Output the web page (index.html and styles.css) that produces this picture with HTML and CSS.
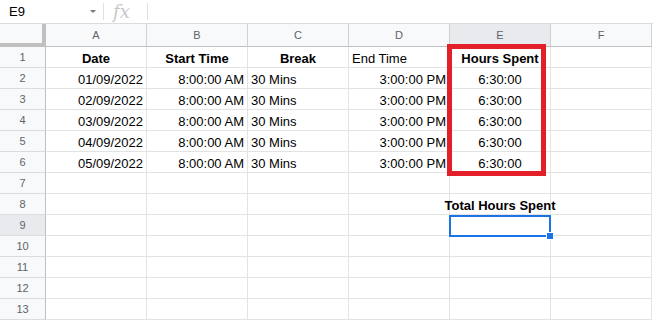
FILE: index.html
```html
<!DOCTYPE html>
<html lang="en">
  <head>
    <meta charset="UTF-8" />
    <title>Hours Spent</title>
    <link rel="stylesheet" href="styles.css">
  </head>
  <body>
    <div class="topbar">
      <div class="namebox">E9</div>
      <div class="namebox-arrow"></div>
      <div class="sep"></div>
      <div class="fx">fx</div>
      <div class="sep"></div>
    </div>

    <div class="sheet">
      <div class="cell corner"></div>
      <div class="cell col-head">A</div>
      <div class="cell col-head">B</div>
      <div class="cell col-head">C</div>
      <div class="cell col-head">D</div>
      <div class="cell col-head active">E</div>
      <div class="cell col-head">F</div>

      <div class="cell row-head">1</div>
      <div class="cell center bold">Date</div>
      <div class="cell center bold">Start Time</div>
      <div class="cell center bold">Break</div>
      <div class="cell">End Time</div>
      <div class="cell center bold">Hours Spent</div>
      <div class="cell"></div>

      <div class="cell row-head">2</div>
      <div class="cell right">01/09/2022</div>
      <div class="cell right">8:00:00 AM</div>
      <div class="cell">30 Mins</div>
      <div class="cell right">3:00:00 PM</div>
      <div class="cell center">6:30:00</div>
      <div class="cell"></div>

      <div class="cell row-head">3</div>
      <div class="cell right">02/09/2022</div>
      <div class="cell right">8:00:00 AM</div>
      <div class="cell">30 Mins</div>
      <div class="cell right">3:00:00 PM</div>
      <div class="cell center">6:30:00</div>
      <div class="cell"></div>

      <div class="cell row-head">4</div>
      <div class="cell right">03/09/2022</div>
      <div class="cell right">8:00:00 AM</div>
      <div class="cell">30 Mins</div>
      <div class="cell right">3:00:00 PM</div>
      <div class="cell center">6:30:00</div>
      <div class="cell"></div>

      <div class="cell row-head">5</div>
      <div class="cell right">04/09/2022</div>
      <div class="cell right">8:00:00 AM</div>
      <div class="cell">30 Mins</div>
      <div class="cell right">3:00:00 PM</div>
      <div class="cell center">6:30:00</div>
      <div class="cell"></div>

      <div class="cell row-head">6</div>
      <div class="cell right">05/09/2022</div>
      <div class="cell right">8:00:00 AM</div>
      <div class="cell">30 Mins</div>
      <div class="cell right">3:00:00 PM</div>
      <div class="cell center">6:30:00</div>
      <div class="cell"></div>

      <div class="cell row-head">7</div>
      <div class="cell"></div><div class="cell"></div><div class="cell"></div>
      <div class="cell"></div><div class="cell"></div><div class="cell"></div>

      <div class="cell row-head">8</div>
      <div class="cell"></div><div class="cell"></div><div class="cell"></div>
      <div class="cell"></div>
      <div class="cell center bold">Total Hours Spent</div>
      <div class="cell"></div>

      <div class="cell row-head active">9</div>
      <div class="cell"></div><div class="cell"></div><div class="cell"></div>
      <div class="cell"></div><div class="cell"></div><div class="cell"></div>

      <div class="cell row-head">10</div>
      <div class="cell"></div><div class="cell"></div><div class="cell"></div>
      <div class="cell"></div><div class="cell"></div><div class="cell"></div>

      <div class="cell row-head">11</div>
      <div class="cell"></div><div class="cell"></div><div class="cell"></div>
      <div class="cell"></div><div class="cell"></div><div class="cell"></div>

      <div class="cell row-head">12</div>
      <div class="cell"></div><div class="cell"></div><div class="cell"></div>
      <div class="cell"></div><div class="cell"></div><div class="cell"></div>

      <div class="cell row-head">13</div>
      <div class="cell"></div><div class="cell"></div><div class="cell"></div>
      <div class="cell"></div><div class="cell"></div><div class="cell"></div>

      <!-- annotation box round the Hours Spent column -->
      <div class="highlight"></div>

      <!-- selected cell E9 -->
      <div class="selection"></div>
      <div class="handle"></div>
    </div>
  </body>
</html>
```

FILE: styles.css
```css
body {
  margin: 0;
  background-color: #fff;
  font-family: "Liberation Sans", Arial, sans-serif;
  width: 653px;
}

.topbar {
  display: flex;
  align-items: center;
  height: 23px;
  border-bottom: 1px solid #dadce0;
}

.namebox {
  width: 80px;
  padding-left: 9px;
  font-size: 13px;
  color: #000;
}

.namebox-arrow {
  width: 0;
  height: 0;
  margin-left: 1px;
  margin-right: 7px;
  border-left: 3px solid transparent;
  border-right: 3px solid transparent;
  border-top: 3px solid #777;
}

.sep {
  width: 1px;
  height: 17px;
  background-color: #e0e0e0;
}

.fx {
  box-sizing: border-box;
  width: 43px;
  padding-left: 9px;
  font-family: "DejaVu Serif", "Liberation Serif", serif;
  font-style: italic;
  font-size: 18px;
  line-height: 20px;
  color: #c8c8c8;
}

.sheet {
  position: relative;
  display: grid;
  grid-template-columns: 46px repeat(6, 101px);
  grid-template-rows: 23px;
  grid-auto-rows: 21px;
}

.cell {
  box-sizing: border-box;
  border-right: 1px solid #e2e3e3;
  border-bottom: 1px solid #e2e3e3;
  padding: 2px 3px 0;
  font-size: 13px;
  line-height: 19px;
  color: #000;
  white-space: nowrap;
}

.corner {
  background-color: #f8f9fa;
  border-right: 4px solid #c0c0c0;
  border-bottom: 4px solid #c0c0c0;
}

.col-head {
  padding: 0;
  background-color: #f8f9fa;
  border-right-color: #d0d0d0;
  border-bottom-color: #c0c0c0;
  text-align: center;
  font-size: 11px;
  line-height: 22px;
  color: #5f6368;
}

.row-head {
  padding: 0;
  background-color: #f8f9fa;
  border-right-color: #c0c0c0;
  border-bottom-color: #dadce0;
  text-align: center;
  font-size: 11px;
  line-height: 20px;
  color: #5f6368;
}

.active {
  background-color: #e8eaed;
}

.center {
  display: flex;
  justify-content: center;
}

.right {
  text-align: right;
}

.bold {
  font-weight: bold;
}

.highlight {
  position: absolute;
  left: 447px;
  top: 20px;
  width: 99px;
  height: 132px;
  box-sizing: border-box;
  border: 5px solid #e3202a;
}

.selection {
  position: absolute;
  left: 449px;
  top: 191px;
  width: 102px;
  height: 22px;
  box-sizing: border-box;
  border: 2px solid #1a73e8;
}

.handle {
  position: absolute;
  left: 546px;
  top: 208px;
  width: 6px;
  height: 6px;
  background-color: #1a73e8;
  border: 1px solid #fff;
}
```
